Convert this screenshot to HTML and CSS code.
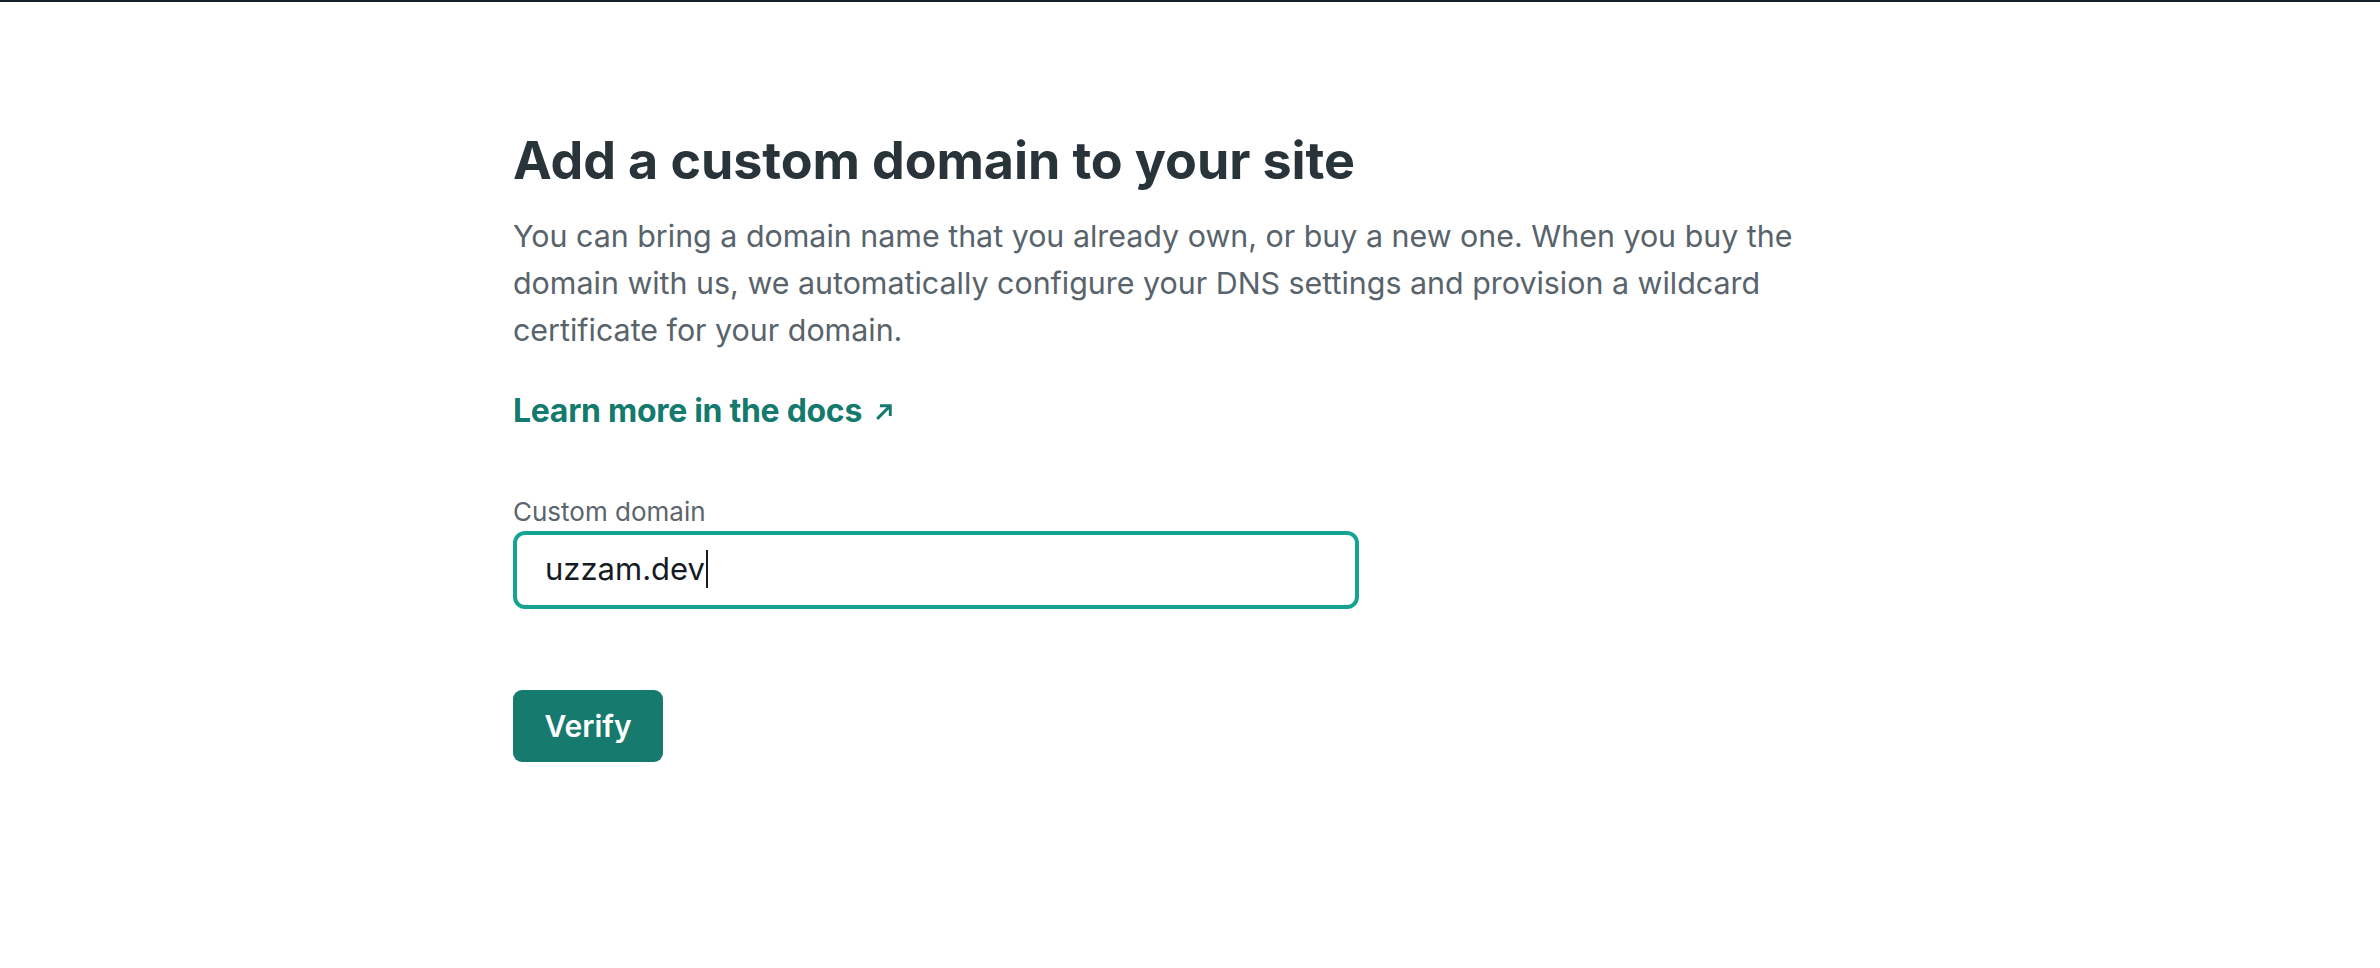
FILE: index.html
```html
<!DOCTYPE html>
<html lang="en">
<head>
<meta charset="utf-8">
<title>Add a custom domain</title>
<link rel="stylesheet" href="styles.css">
</head>
<body>
<main class="page">
  <section class="panel">
    <h1 class="title">Add a custom domain to your site</h1>
    <p class="lead">You can bring a domain name that you already own, or buy a new one. When you buy the domain with us, we automatically configure your DNS settings and provision a wildcard certificate for your domain.</p>
    <a class="docs-link" href="#">Learn more in the docs <svg class="arrow" viewBox="0 0 20 20" width="20" height="20" aria-hidden="true"><path d="M4 16 L15 5 M7 4.5 H15.5 V13" fill="none" stroke="currentColor" stroke-width="2.8" stroke-linecap="square"/></svg></a>
    <form class="form">
      <label class="field-label" for="domain">Custom domain</label>
      <div class="field" id="domain" role="textbox">uzzam.dev<span class="caret"></span></div>
      <button type="button" class="btn">Verify</button>
    </form>
  </section>
</main>
</body>
</html>
```

FILE: styles.css
```css
html, body {
  margin: 0;
  padding: 0;
  background: #ffffff;
}

body {
  border-top: 2px solid #142128;
  font-family: Inter, "Noto Sans", "Liberation Sans", sans-serif;
  min-height: 966px;
  box-sizing: border-box;
}

.page {
  display: flex;
  justify-content: center;
}

.panel {
  width: 1354px;
  padding-top: 129px;
  display: flex;
  flex-direction: column;
  align-items: flex-start;
}

.title {
  margin: 0;
  font-size: 52px;
  line-height: 60px;
  font-weight: 700;
  color: #29333a;
  letter-spacing: -0.1px;
}

.lead {
  margin: 22px 0 0;
  max-width: 1300px;
  font-size: 30.4px;
  line-height: 47px;
  color: #58636b;
}

.docs-link {
  margin-top: 37px;
  display: inline-flex;
  align-items: center;
  gap: 12px;
  font-size: 32px;
  line-height: 40px;
  font-weight: 700;
  color: #157a6e;
  text-decoration: none;
  letter-spacing: -0.3px;
}

.arrow {
  width: 21px;
  height: 21px;
  margin-top: 1px;
}

.form {
  margin-top: 67px;
  display: flex;
  flex-direction: column;
  align-items: flex-start;
}

.field-label {
  font-size: 26px;
  line-height: 28px;
  color: #5a656d;
}

.field {
  margin-top: 5px;
  box-sizing: border-box;
  width: 846px;
  height: 78px;
  border: 4px solid #15a394;
  border-radius: 12px;
  padding: 15px 28px 17px;
  font-size: 31px;
  line-height: 38px;
  color: #141b22;
  display: flex;
  align-items: center;
}

.caret {
  display: inline-block;
  width: 2px;
  height: 38px;
  margin-left: 1px;
  background: #141b22;
}

.btn {
  margin-top: 81px;
  width: 150px;
  height: 72px;
  border: none;
  border-radius: 9px;
  background: #167a6e;
  color: #ffffff;
  font-family: inherit;
  font-size: 30px;
  font-weight: 600;
  cursor: pointer;
}
```
